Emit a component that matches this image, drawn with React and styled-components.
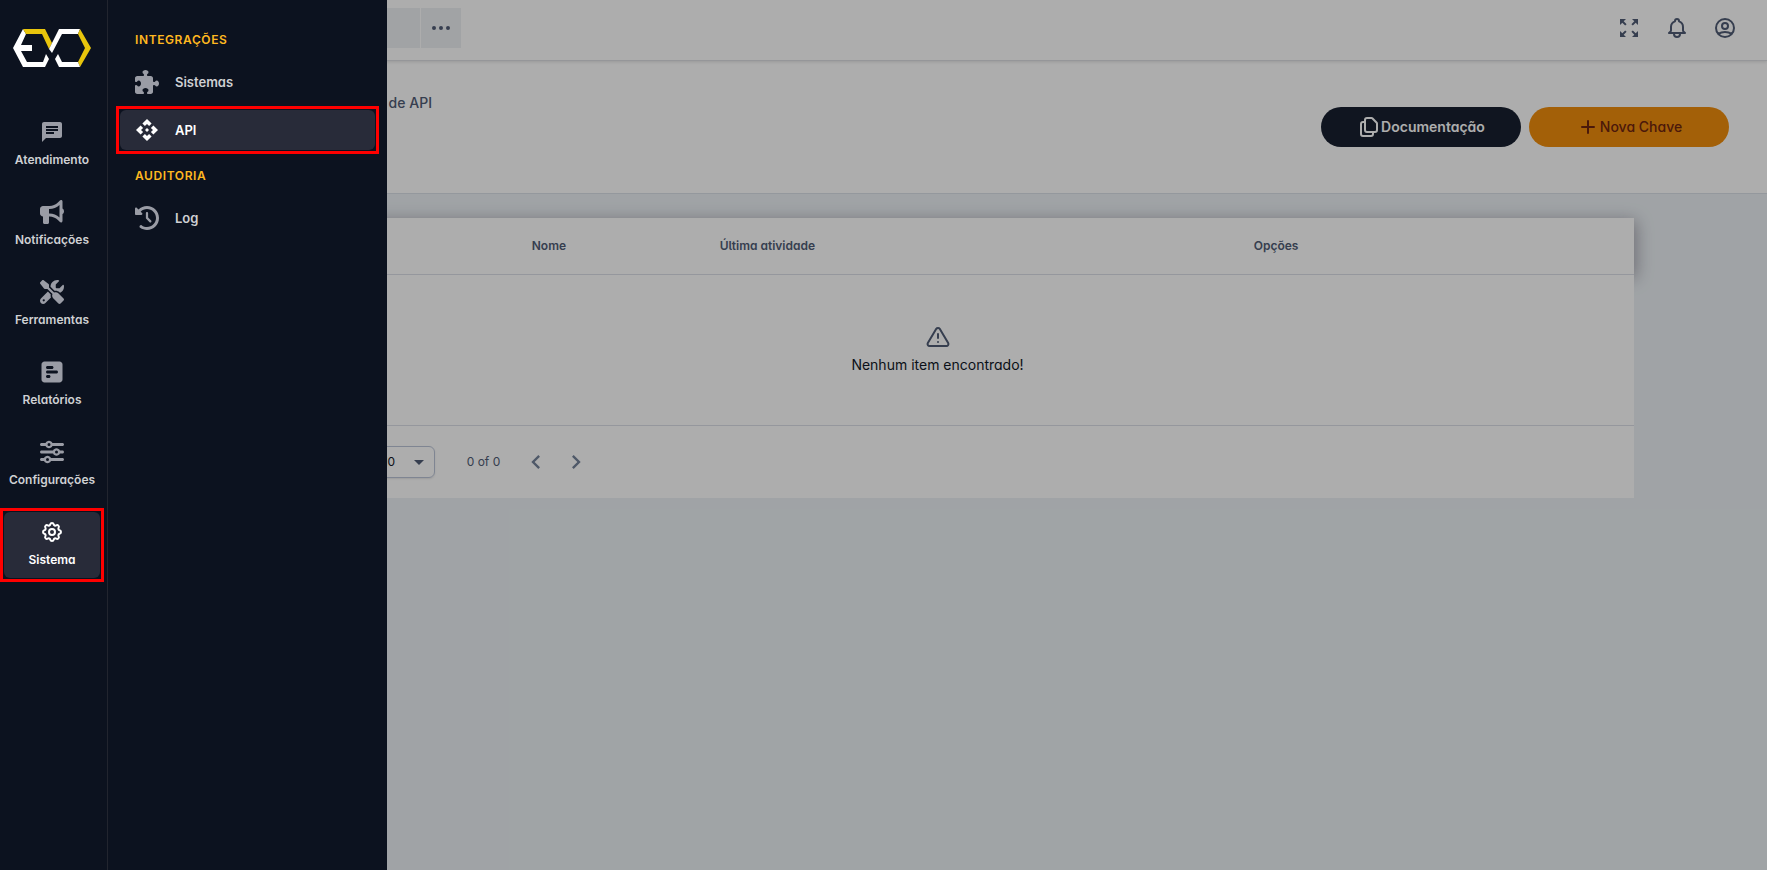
import React from "react";
import styled, { createGlobalStyle, css } from "styled-components";
import {
  FaBullhorn,
  FaScrewdriverWrench,
  FaPuzzlePiece,
  FaClockRotateLeft,
  FaSquarePollHorizontal,
  FaSliders,
} from "react-icons/fa6";
import { FiAlertTriangle } from "react-icons/fi";
import { MdChat, MdApi, MdZoomOutMap, MdChevronLeft, MdChevronRight } from "react-icons/md";
import {
  HiOutlineCog,
  HiOutlineBell,
  HiOutlineUserCircle,
  HiOutlineDocumentDuplicate,
  HiOutlineDotsHorizontal,
} from "react-icons/hi";

const color = {
  navy: "#0c121f",
  active: "#282b39",
  muted: "#9a9ca5",
  label: "#cfd0d3",
  accent: "#ffb81f",
  mark: "#ff0000",
  slate: "#505c75",
  ink: "#111827",
};

const GlobalStyle = createGlobalStyle`
  *, *::before, *::after { box-sizing: border-box; }
  body {
    margin: 0;
    background: #ecf1f5;
    color: ${color.ink};
    font-family: Inter, "Liberation Sans", sans-serif;
    font-size: 14px;
    line-height: 20px;
    font-feature-settings: "cv11", "cv05";
  }
  button, select { font: inherit; font-feature-settings: inherit; color: inherit; }
  button { border: 0; padding: 0; background: none; cursor: pointer; }
  a { color: inherit; text-decoration: none; }
  svg { display: block; flex: none; }
`;

const Shell = styled.div`
  display: grid;
  grid-template-columns: 108px minmax(0, 1fr);
  min-height: 100vh;
  position: relative;
`;

const Rail = styled.nav`
  display: flex;
  flex-direction: column;
  gap: 14px;
  padding: 0 0 0 4px;
  background: ${color.navy};
  border-right: 1px solid #22252f;
  position: relative;
  z-index: 2;
`;

const LogoLink = styled.a`
  display: flex;
  width: 96px;
  height: 98px;
  padding: 28px 0 0 8px;
`;

const marked = css`
  position: relative;
  background: ${color.active};
  color: #fff;
  svg { color: #fff; }
  &::after {
    content: "";
    position: absolute;
    inset: -4px;
    border: 3px solid ${color.mark};
    pointer-events: none;
  }
`;

const RailItem = styled.a`
  display: flex;
  flex-direction: column;
  align-items: center;
  gap: 6px;
  width: 96px;
  height: 66px;
  padding-top: 8px;
  border-radius: 6px;
  font-size: 12px;
  font-weight: 600;
  color: ${color.label};
  svg { color: ${color.muted}; }
  ${(p) => p.$active && marked}
`;

const Flyout = styled.aside`
  position: absolute;
  top: 0;
  bottom: 0;
  left: 108px;
  width: 279px;
  padding: 20px 12px;
  background: ${color.navy};
  z-index: 2;
`;

const GroupTitle = styled.h2`
  display: flex;
  align-items: center;
  height: 40px;
  margin: 0;
  padding: 0 15px;
  font-size: 12px;
  font-weight: 600;
  letter-spacing: 0.05em;
  text-transform: uppercase;
  color: ${color.accent};
`;

const GroupList = styled.ul`
  display: grid;
  gap: 8px;
  margin: 2px 0 6px;
  padding: 0;
  list-style: none;
`;

const FlyoutItem = styled.a`
  display: flex;
  align-items: center;
  gap: 16px;
  height: 40px;
  padding: 0 15px;
  border-radius: 6px;
  font-size: 13px;
  font-weight: 600;
  color: ${color.label};
  svg { color: ${color.muted}; }
  ${(p) => p.$active && marked}
`;

const Scrim = styled.div`
  position: absolute;
  inset: 0;
  background: rgba(0, 0, 0, 0.32);
  z-index: 1;
`;

const Main = styled.main`
  min-width: 0;
`;

const TopBar = styled.header`
  display: flex;
  align-items: center;
  justify-content: space-between;
  height: 61px;
  padding: 0 18px 4px 272px;
  background: #fff;
  border-bottom: 1px solid #dcdee2;
  box-shadow: 0 1px 3px rgba(0, 0, 0, 0.12);
  position: relative;
`;

const Shortcuts = styled.div`
  display: flex;
  gap: 1px;
`;

const Shortcut = styled.button`
  display: grid;
  place-items: center;
  width: 40px;
  height: 40px;
  background: #eef1f4;
  color: ${color.slate};
`;

const Actions = styled.div`
  display: flex;
`;

const IconButton = styled.button`
  display: grid;
  place-items: center;
  width: 48px;
  height: 40px;
  color: ${color.slate};
`;

const PageHead = styled.section`
  display: flex;
  justify-content: space-between;
  height: 133px;
  padding: 0 38px 0 226px;
  background: #fff;
  border-bottom: 1px solid #dbe1e8;
`;

const Title = styled.h1`
  margin: 32px 0 0;
  font-size: 14px;
  font-weight: 500;
  color: ${color.slate};
`;

const HeadButtons = styled.div`
  display: flex;
  align-items: center;
  gap: 8px;
`;

const Pill = styled.button`
  display: flex;
  align-items: center;
  justify-content: center;
  width: 200px;
  height: 40px;
  border-radius: 20px;
  font-weight: ${(p) => (p.$primary ? 500 : 600)};
  background: ${(p) => (p.$primary ? "#f18e0d" : "#182030")};
  color: ${(p) => (p.$primary ? "#6f2510" : "#fff")};
`;

const Card = styled.section`
  margin: 24px 8%;
  background: #fff;
`;

const Table = styled.table`
  width: 100%;
  border-collapse: separate;
  border-spacing: 0;
  table-layout: fixed;
`;

const HeadRow = styled.tr`
  height: 57px;
  box-shadow: 2px 3px 16px rgba(50, 40, 60, 0.4);
`;

const Th = styled.th`
  width: ${(p) => p.$width};
  padding: 0;
  border-bottom: 1px solid #dcdfe8;
  text-align: left;
  font-size: 12px;
  font-weight: 600;
  color: ${color.slate};
`;

const EmptyCell = styled.td`
  height: 150px;
  padding: 0;
  background: #fff;
  position: relative;
`;

const Empty = styled.div`
  display: flex;
  flex-direction: column;
  align-items: center;
  gap: 6px;
  svg { color: ${color.slate}; }
`;

const Pager = styled.footer`
  display: flex;
  align-items: center;
  height: 73px;
  padding-left: 106px;
  border-top: 1px solid #dcdfe8;
  font-size: 12px;
  color: ${color.slate};
`;

const SelectBox = styled.label`
  display: grid;
  align-items: center;
  width: 88px;
  height: 32px;
  margin-right: 32px;
  border: 1px solid #bcc5d8;
  border-radius: 6px;
  box-shadow: 0 1px 2px rgba(0, 0, 0, 0.1);
  color: ${color.ink};
  select, svg { grid-area: 1 / 1; }
  svg { justify-self: end; margin-right: 10px; color: ${color.slate}; pointer-events: none; }
`;

const Select = styled.select`
  width: 100%;
  height: 30px;
  padding: 0 0 0 35px;
  border: 0;
  background: none;
  appearance: none;
`;

const PageButton = styled.button`
  display: grid;
  place-items: center;
  width: 40px;
  height: 40px;
  color: #75839a;
`;

const Range = styled.span`
  width: 49px;
`;

function Logo() {
  return (
    <svg width="80" height="40" viewBox="0 0 80 40" role="img" aria-label="EXO">
      <path fill="#fff" d="M11 1 1 20 11 39H33L37 31 34 26 31 34H15L9 23H20V17H9L14 6Z" />
      <path fill="#e8c50c" d="M11 1H33L40 15 37 21 30 6H14Z" />
      <path fill="#fff" d="M37 21 47 1H68L66 6H50L40 25Z" />
      <path fill="#e8c50c" d="M68 1 79 20 68 39 66 34 73 20 66 6Z" />
      <path fill="#fff" d="M43 31 46 26 50 34H66L68 39H47Z" />
    </svg>
  );
}

const railItems = [
  { label: "Atendimento", icon: <MdChat size={24} /> },
  { label: "Notificações", icon: <FaBullhorn size={24} /> },
  { label: "Ferramentas", icon: <FaScrewdriverWrench size={24} /> },
  { label: "Relatórios", icon: <FaSquarePollHorizontal size={24} /> },
  { label: "Configurações", icon: <FaSliders size={24} /> },
  { label: "Sistema", icon: <HiOutlineCog size={24} />, active: true },
];

const groups = [
  {
    title: "Integrações",
    items: [
      { label: "Sistemas", icon: <FaPuzzlePiece size={24} /> },
      { label: "API", icon: <MdApi size={24} />, active: true },
    ],
  },
  { title: "Auditoria", items: [{ label: "Log", icon: <FaClockRotateLeft size={24} /> }] },
];

export default function App() {
  return (
    <>
      <GlobalStyle />
      <Shell>
        <Rail aria-label="Principal">
          <LogoLink href="#">
            <Logo />
          </LogoLink>
          {railItems.map((item) => (
            <RailItem key={item.label} href="#" $active={item.active}>
              {item.icon}
              {item.label}
            </RailItem>
          ))}
        </Rail>

        <Flyout>
          {groups.map((group) => (
            <React.Fragment key={group.title}>
              <GroupTitle>{group.title}</GroupTitle>
              <GroupList>
                {group.items.map((item) => (
                  <li key={item.label}>
                    <FlyoutItem href="#" $active={item.active}>
                      {item.icon}
                      {item.label}
                    </FlyoutItem>
                  </li>
                ))}
              </GroupList>
            </React.Fragment>
          ))}
        </Flyout>

        <Main>
          <TopBar>
            <Shortcuts>
              <Shortcut aria-label="Atalho" />
              <Shortcut aria-label="Mais">
                <HiOutlineDotsHorizontal size={24} />
              </Shortcut>
            </Shortcuts>
            <Actions>
              <IconButton aria-label="Tela cheia">
                <MdZoomOutMap size={24} />
              </IconButton>
              <IconButton aria-label="Notificações">
                <HiOutlineBell size={24} />
              </IconButton>
              <IconButton aria-label="Conta">
                <HiOutlineUserCircle size={24} />
              </IconButton>
            </Actions>
          </TopBar>

          <PageHead>
            <Title>Chaves de API</Title>
            <HeadButtons>
              <Pill>
                <HiOutlineDocumentDuplicate size={24} />
                Documentação
              </Pill>
              <Pill $primary>
                <svg width="24" height="24" viewBox="0 0 24 24" fill="none" stroke="currentColor" strokeWidth="2" strokeLinecap="round">
                  <path d="M12 6v12M6 12h12" />
                </svg>
                Nova Chave
              </Pill>
            </HeadButtons>
          </PageHead>

          <Card>
            <Table>
              <thead>
                <HeadRow>
                  <Th $width="291px" aria-label="Seleção" />
                  <Th $width="188px">Nome</Th>
                  <Th $width="534px">Última atividade</Th>
                  <Th>Opções</Th>
                </HeadRow>
              </thead>
              <tbody>
                <tr>
                  <EmptyCell colSpan={4}>
                    <Empty>
                      <FiAlertTriangle size={24} />
                      Nenhum item encontrado!
                    </Empty>
                  </EmptyCell>
                </tr>
              </tbody>
            </Table>
            <Pager>
              <SelectBox>
                <Select aria-label="Itens por página" defaultValue="10">
                  <option value="10">10</option>
                </Select>
                <svg width="10" height="5" viewBox="0 0 10 5" fill="currentColor">
                  <path d="M0 0h10L5 5z" />
                </svg>
              </SelectBox>
              <Range>0 of 0</Range>
              <PageButton aria-label="Página anterior">
                <MdChevronLeft size={28} />
              </PageButton>
              <PageButton aria-label="Próxima página">
                <MdChevronRight size={28} />
              </PageButton>
            </Pager>
          </Card>
        </Main>
        <Scrim />
      </Shell>
    </>
  );
}
